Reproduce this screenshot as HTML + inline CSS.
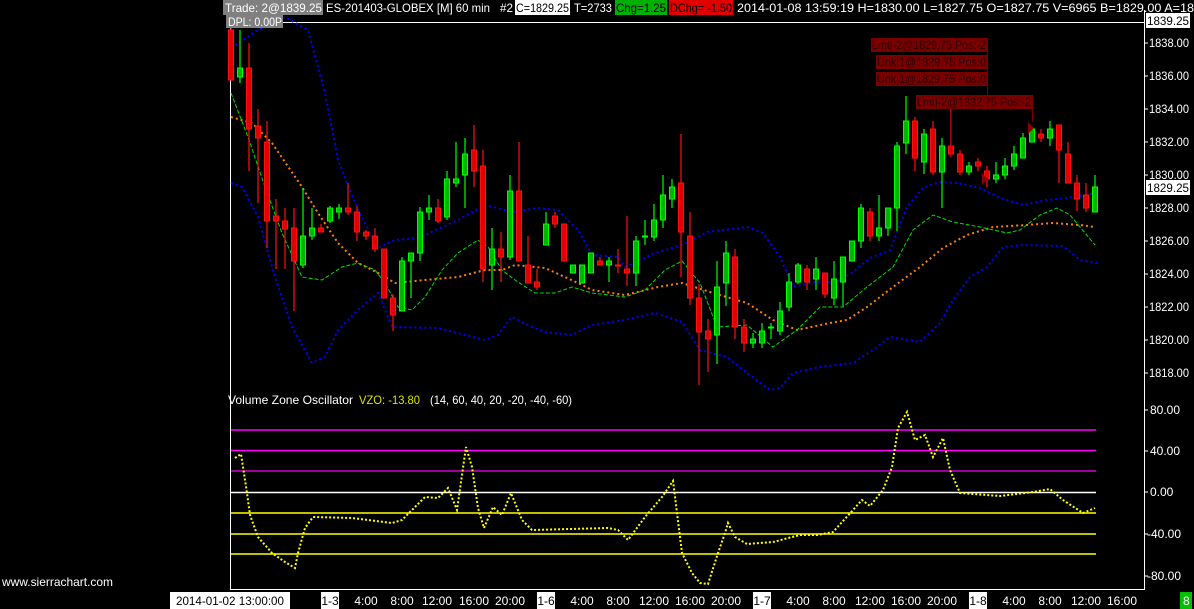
<!DOCTYPE html>
<html><head><meta charset="utf-8"><style>
html,body{margin:0;padding:0;background:#000;width:1194px;height:609px;overflow:hidden}
svg{display:block}
text{font-family:"Liberation Sans",sans-serif;font-size:12px}
</style></head><body>
<svg id="s" width="1194" height="609" viewBox="0 0 1194 609" xmlns="http://www.w3.org/2000/svg">
<rect width="1194" height="609" fill="#000"/>
<!-- frame -->
<line x1="230.5" y1="10" x2="230.5" y2="590" stroke="#fff"/>
<line x1="230" y1="22.5" x2="1144" y2="22.5" stroke="#fff"/>
<line x1="1144.5" y1="10" x2="1144.5" y2="590" stroke="#fff"/>
<line x1="230" y1="589.5" x2="1144" y2="589.5" stroke="#fff"/>
<!-- oscillator lines -->
<g stroke-width="1.5">
<line x1="231" y1="430" x2="1096" y2="430" stroke="#ff00ff"/>
<line x1="231" y1="450.5" x2="1096" y2="450.5" stroke="#ff00ff"/>
<line x1="231" y1="471" x2="1096" y2="471" stroke="#d000d0"/>
<line x1="231" y1="492.5" x2="1096" y2="492.5" stroke="#fff"/>
<line x1="231" y1="513" x2="1096" y2="513" stroke="#ffff00"/>
<line x1="231" y1="534" x2="1096" y2="534" stroke="#ffff00"/>
<line x1="231" y1="554" x2="1096" y2="554" stroke="#ffff00"/>
</g>
<g id="bands" fill="none"></g>
<g id="candles"></g>
<polyline fill="none" stroke="#ffff00" stroke-width="2" stroke-dasharray="2 2" points="235,458 241,454 247,493 250,515 258,537 272,553 285,562 295,568 298,553 305,528 313,517 352,518 392,523 402,520 412,510 425,497 438,498 448,488 457,510 466,447 472,467 478,508 484,528 493,507 502,515 511,493 522,520 532,530 608,528 618,530 628,540 645,517 662,497 673,481 682,553 692,573 700,583 708,584 718,553 725,533 728,523 735,537 747,544 773,542 800,535 817,535 833,532 853,510 862,500 870,506 883,490 892,467 898,428 907,412 915,440 925,435 933,457 943,438 950,470 960,493 1000,496 1033,492 1050,489 1063,500 1083,513 1095,508"/>
<!-- orders -->
<g fill="#7a0000">
<rect x="871" y="38" width="117" height="14"/>
<rect x="876" y="55" width="112" height="14"/>
<rect x="876" y="72" width="112" height="14"/>
<rect x="916" y="95" width="117" height="14"/>
</g>
<g stroke="#7a0000" stroke-width="1">
<line x1="987.5" y1="50" x2="987.5" y2="96"/>
<line x1="951.5" y1="109" x2="951.5" y2="157"/>
<line x1="1032.5" y1="109" x2="1032.5" y2="122"/>
</g>
<polygon points="1028,122 1034,128 1028,134" fill="#8b0000"/>
<polygon points="982,173 988,179 982,185" fill="#8b0000"/>
<g fill="#2a0000" font-size="12">
<text x="872" y="49" textLength="114" lengthAdjust="spacingAndGlyphs">Lmt|-2@1829.75 Pos:-2</text>
<text x="877" y="66" textLength="109" lengthAdjust="spacingAndGlyphs">Unk|1@1829.75 Pos:0</text>
<text x="877" y="83" textLength="109" lengthAdjust="spacingAndGlyphs">Unk|1@1829.75 Pos:0</text>
<text x="917" y="106" textLength="114" lengthAdjust="spacingAndGlyphs">Lmt|-2@1832.75 Pos:-2</text>
</g>
<!-- header -->
<rect x="223" y="0" width="100" height="15" fill="#808080"/>
<rect x="226" y="14" width="57" height="14" fill="#808080"/>
<rect x="515" y="0" width="55" height="15" fill="#fff"/>
<rect x="615" y="0" width="52" height="15" fill="#00b000"/>
<rect x="669" y="0" width="64" height="15" fill="#e00000"/>
<g fill="#fff">
<text x="225" y="12" textLength="97" lengthAdjust="spacingAndGlyphs">Trade: 2@1839.25</text>
<text x="228" y="26" textLength="54" lengthAdjust="spacingAndGlyphs">DPL: 0.00P</text>
<text x="326" y="12" textLength="164" lengthAdjust="spacingAndGlyphs">ES-201403-GLOBEX [M]  60 min</text>
<text x="500" y="12" textLength="13" lengthAdjust="spacingAndGlyphs">#2</text>
<text x="574" y="12" textLength="38" lengthAdjust="spacingAndGlyphs">T=2733</text>
<text x="737" y="12" textLength="457" lengthAdjust="spacingAndGlyphs">2014-01-08 13:59:19 H=1830.00 L=1827.75 O=1827.75 V=6965 B=1829.00 A=18</text>
</g>
<text x="516" y="12" fill="#000" textLength="53" lengthAdjust="spacingAndGlyphs">C=1829.25</text>
<text x="616" y="12" fill="#000" textLength="50" lengthAdjust="spacingAndGlyphs">Chg=1.25</text>
<text x="670" y="12" fill="#000" textLength="62" lengthAdjust="spacingAndGlyphs">DChg= -1.50</text>
<!-- oscillator title -->
<text x="228" y="404" fill="#fff" textLength="125" lengthAdjust="spacingAndGlyphs">Volume Zone Oscillator</text>
<text x="359" y="404" fill="#e0e000" textLength="61" lengthAdjust="spacingAndGlyphs">VZO: -13.80</text>
<text x="430" y="404" fill="#fff" textLength="142" lengthAdjust="spacingAndGlyphs">(14, 60, 40, 20, -20, -40, -60)</text>
<!-- price axis -->
<g id="axis" fill="#fff" stroke="#fff"></g>
<rect x="1146" y="13" width="44" height="15" fill="#fff"/>
<text x="1147" y="25" fill="#000" textLength="42" lengthAdjust="spacingAndGlyphs">1839.25</text>
<rect x="1146" y="180" width="44" height="15" fill="#fff"/>
<text x="1147" y="192" fill="#000" textLength="42" lengthAdjust="spacingAndGlyphs">1829.25</text>
<!-- bottom -->
<text x="2" y="586" fill="#fff" font-size="11" textLength="111" lengthAdjust="spacingAndGlyphs">www.sierrachart.com</text>
<rect x="170" y="592" width="120" height="17" fill="#fff"/>
<text x="176" y="605" fill="#000" textLength="108" lengthAdjust="spacingAndGlyphs">2014-01-02  13:00:00</text>
<g id="dates"></g>
<rect x="1180" y="592" width="12" height="17" fill="#00c000"/>
<text x="1183" y="605" fill="#fff">8</text>
</svg>
<script>
var NS="http://www.w3.org/2000/svg";
function el(p,t,a,txt){var e=document.createElementNS(NS,t);for(var k in a)e.setAttribute(k,a[k]);if(txt!=null)e.textContent=txt;p.appendChild(e);return e;}
var C=[
['r',30,80,10,80],['g',77,68,30,83],['r',68,129,43,171],['r',126,138,109,203],['r',142,221,121,248],['r',216,221,199,269],['r',221,229,208,269],['r',228,261,208,311],['g',265,236,188,268],['g',236,228,208,240],
['r',228,232,224,232],['g',221,208,206,223],['g',212,208,204,219],['r',208,212,183,215],['r',212,232,206,241],['r',232,236,230,240],['r',236,249,228,252],['r',249,298,249,298],['r',298,315,294,331],['g',311,261,257,311],
['g',261,253,253,298],['g',253,212,207,261],['g',212,208,195,220],['r',208,221,199,223],['g',217,179,171,220],['g',183,179,142,187],['g',175,154,138,208],['r',150,171,125,187],['r',166,269,150,282],['g',265,249,228,290],
['r',249,257,232,282],['g',257,191,175,260],['r',191,261,142,261],['r',265,283,236,283],['r',282,287,269,290],['g',245,224,212,245],['r',216,224,212,228],['r',224,261,224,261],['g',273,265,265,273],['g',283,265,265,283],
['g',273,253,253,273],['r',261,265,257,265],['g',265,261,257,282],['r',265,266,249,273],['r',269,273,216,286],['g',273,241,236,286],['g',237,236,220,245],['g',237,220,204,241],['g',220,195,175,228],['g',199,187,179,208],
['r',183,232,134,277],['r',236,298,212,305],['r',298,332,284,385],['r',331,339,319,372],['g',335,287,261,364],['g',283,253,241,306],['r',257,327,249,339],['r',327,343,319,352],['g',343,339,333,348],['g',343,331,323,348],
['g',328,327,323,339],['g',331,311,302,335],['g',307,282,273,311],['g',282,265,263,284],['r',269,282,265,290],['g',279,269,257,290],['r',273,294,273,298],['g',298,279,261,305],['g',282,257,257,306],['g',261,241,241,261],
['g',241,208,204,248],['r',212,236,208,241],['g',236,228,195,241],['g',228,208,208,236],['g',208,146,142,231],['g',143,121,96,154],['r',121,158,117,171],['g',162,134,129,174],['r',129,172,121,175],['g',172,146,138,208],
['r',146,154,108,157],['r',154,172,150,175],['g',172,166,162,175],['r',162,166,158,171],['r',171,179,166,187],['g',179,175,162,183],['g',175,166,158,179],['g',166,154,146,170],['g',158,138,133,158],['g',142,129,129,142],
['r',134,138,129,142],['g',138,129,121,146],['r',125,150,125,183],['r',154,183,142,183],['r',183,199,175,211],['r',195,208,183,212],['g',212,187,175,212]];
var cg=document.getElementById('candles');
C.forEach(function(c,i){var x=231+i*9.0;var col=c[0]=='g'?'#00ff00':'#ff1010';var fill=c[0]=='g'?'#00b400':'#e00000';
el(cg,'line',{x1:x,x2:x,y1:c[3],y2:c[4],stroke:col,'stroke-width':1.2});
var t=Math.min(c[1],c[2]),b=Math.max(c[1],c[2]);if(b-t<1){b=t+1;}
el(cg,'rect',{x:x-2.5,y:t,width:5,height:b-t,fill:fill,stroke:col,'stroke-width':1});});
var bg=document.getElementById('bands');
var up="231,48 258,30 285,17 308,30 325,93 338,160 358,210 378,248 395,240 418,238 458,220 485,205 512,212 538,208 558,210 578,230 592,255 618,257 625,267 655,253 682,245 707,232 747,227 763,233 780,257 793,287 813,282 837,282 853,272 870,258 890,250 907,207 923,188 940,182 957,183 980,188 1000,198 1023,205 1047,200 1067,198 1097,193";
var lo="231,183 242,187 258,217 275,277 292,327 312,363 325,357 338,330 358,310 378,293 392,327 438,328 485,340 498,335 512,317 532,327 545,332 572,335 592,325 625,320 655,313 682,322 700,350 727,357 747,373 770,390 780,388 793,373 820,367 853,363 873,350 890,337 920,342 940,323 953,300 970,277 987,267 1003,247 1023,245 1063,246 1080,260 1097,263";
var mid="231,93 248,137 265,187 282,233 302,277 322,280 342,267 358,263 375,270 385,283 398,307 412,310 425,297 442,270 458,253 478,240 488,247 502,270 515,280 535,293 555,293 572,287 592,293 625,297 645,290 665,270 682,261 700,283 717,327 747,325 773,347 797,330 820,307 843,307 867,287 893,267 913,230 933,215 953,222 980,227 1007,233 1020,230 1040,215 1057,208 1070,215 1080,227 1095,245";
var org="231,117 252,123 272,143 302,187 318,213 338,243 358,263 378,273 395,283 425,280 458,277 485,270 502,270 515,265 545,268 578,283 592,290 625,295 658,287 682,283 713,293 747,303 773,320 797,330 830,323 847,320 867,307 893,287 920,267 943,248 967,235 993,227 1027,225 1053,223 1080,225 1095,227";
el(bg,'polyline',{points:up,stroke:'#0000ff','stroke-width':2,'stroke-dasharray':'2 3'});
el(bg,'polyline',{points:lo,stroke:'#0000ff','stroke-width':2,'stroke-dasharray':'2 3'});
el(bg,'polyline',{points:org,stroke:'#ff8000','stroke-width':2,'stroke-dasharray':'2 3'});
el(bg,'polyline',{points:mid,stroke:'#00e000','stroke-width':1,'stroke-dasharray':'4 2'});
var ax=document.getElementById('axis');
for(var p=1838;p>=1818;p-=2){var y=43+(1838-p)*16.5;el(ax,'line',{x1:1144,x2:1148,y1:y,y2:y});var t=el(ax,'text',{x:1149,y:y+4,stroke:'none',textLength:40,lengthAdjust:'spacingAndGlyphs'},p.toFixed(2));}
[[80,410],[40,451],[0,492],[-40,534],[-80,576]].forEach(function(v){el(ax,'line',{x1:1144,x2:1148,y1:v[1],y2:v[1]});var s=v[0]>0?v[0].toFixed(2):(v[0]==0?'0.00':v[0].toFixed(2));el(ax,'text',{x:v[0]<0?1147:1150,y:v[1]+4,stroke:'none'},s);});
var dg=document.getElementById('dates');
var D=[['1-3',330,1],['4:00',366],['8:00',402],['12:00',437],['16:00',474],['20:00',510],['1-6',546,1],['4:00',582],['8:00',618],['12:00',654],['16:00',690],['20:00',726],['1-7',762,1],['4:00',798],['8:00',834],['12:00',870],['16:00',906],['20:00',942],['1-8',978,1],['4:00',1014],['8:00',1050],['12:00',1086],['16:00',1122]];
D.forEach(function(d){if(d[2]){el(dg,'rect',{x:d[1]-9,y:592,width:18,height:17,fill:'#fff'});el(dg,'text',{x:d[1],y:605,fill:'#000','text-anchor':'middle'},d[0]);}else el(dg,'text',{x:d[1],y:605,fill:'#fff','text-anchor':'middle'},d[0]);});
</script>
</body></html>
